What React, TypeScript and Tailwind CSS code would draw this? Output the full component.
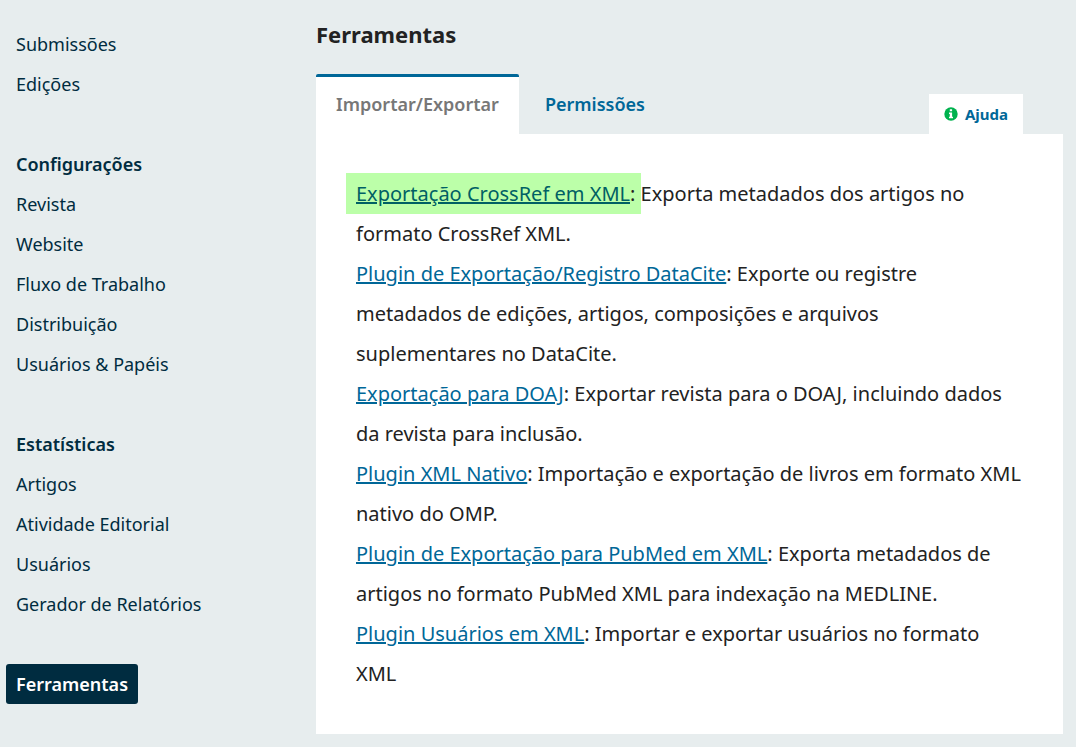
import React, { useState } from 'react';

interface NavItem {
  label: string;
  heading?: boolean;
  current?: boolean;
}

interface Plugin {
  name: string;
  description: string;
  highlighted?: boolean;
}

const NAV_GROUPS: NavItem[][] = [
  [{ label: 'Submissões' }, { label: 'Edições' }],
  [
    { label: 'Configurações', heading: true },
    { label: 'Revista' },
    { label: 'Website' },
    { label: 'Fluxo de Trabalho' },
    { label: 'Distribuição' },
    { label: 'Usuários & Papéis' },
  ],
  [
    { label: 'Estatísticas', heading: true },
    { label: 'Artigos' },
    { label: 'Atividade Editorial' },
    { label: 'Usuários' },
    { label: 'Gerador de Relatórios' },
  ],
  [{ label: 'Ferramentas', current: true }],
];

const PLUGINS: Plugin[] = [
  { name: 'Exportação CrossRef em XML', description: 'Exporta metadados dos artigos no formato CrossRef XML.', highlighted: true },
  { name: 'Plugin de Exportação/Registro DataCite', description: 'Exporte ou registre metadados de edições, artigos, composições e arquivos suplementares no DataCite.' },
  { name: 'Exportação para DOAJ', description: 'Exportar revista para o DOAJ, incluindo dados da revista para inclusão.' },
  { name: 'Plugin XML Nativo', description: 'Importação e exportação de livros em formato XML nativo do OMP.' },
  { name: 'Plugin de Exportação para PubMed em XML', description: 'Exporta metadados de artigos no formato PubMed XML para indexação na MEDLINE.' },
  { name: 'Plugin Usuários em XML', description: 'Importar e exportar usuários no formato XML' },
];

const InfoIcon: React.FC<{ className?: string }> = ({ className }) => (
  <svg className={className} viewBox="0 0 14 14" aria-hidden="true">
    <circle cx="7" cy="7" r="6.7" fill="#00b24e" />
    <path fill="#fff" d="M5.8 2.3h2.3v2H5.8zM5 5.4h3.1v4.3H9v1.6H5V9.7h.8V7H5z" />
  </svg>
);

const SideNav: React.FC = () => (
  <nav className="w-[300px] shrink-0 px-1.5 pt-6 text-[18px] leading-10 text-[#002c40]">
    {NAV_GROUPS.map((group, i) => (
      <ul key={i} className="mb-10">
        {group.map(item => (
          <li key={item.label}>
            {item.heading ? (
              <h2 className="px-2.5 font-semibold">{item.label}</h2>
            ) : (
              <a
                href="#"
                aria-current={item.current ? 'page' : undefined}
                className={item.current ? 'inline-block rounded-[3px] bg-[#002c40] px-2.5 align-top font-semibold text-white' : 'inline-block px-2.5 align-top'}
              >
                {item.label}
              </a>
            )}
          </li>
        ))}
      </ul>
    ))}
  </nav>
);

const PluginLink: React.FC<{ plugin: Plugin }> = ({ plugin }) => (
  <a href="#" className={plugin.highlighted ? 'text-[#006064] underline' : 'text-[#006798] underline'}>{plugin.name}</a>
);

const App: React.FC = () => {
  const [tab, setTab] = useState<'import' | 'permissions'>('import');

  const tabClass = (active: boolean) =>
    active
      ? 'h-[60px] rounded-t-xs border-t-[3px] border-[#006798] bg-white px-5 pb-0.5 text-[18px] font-semibold text-[#777777]'
      : 'h-[60px] border-t-[3px] border-transparent px-[26px] pb-0.5 text-[18px] font-semibold text-[#006798]';

  return (
    <div className="flex min-h-screen bg-[#e7edee] font-['Noto_Sans',sans-serif]">
      <SideNav />
      <main className="min-w-0 flex-1 pt-4 pr-[13px] pl-4">
        <h1 className="mb-[22px] text-[22px] leading-9 font-bold text-[#222222]">Ferramentas</h1>

        <div className="flex items-end">
          <div role="tablist" className="flex">
            <button role="tab" aria-selected={tab === 'import'} onClick={() => setTab('import')} className={tabClass(tab === 'import')}>
              Importar/Exportar
            </button>
            <button role="tab" aria-selected={tab === 'permissions'} onClick={() => setTab('permissions')} className={tabClass(tab === 'permissions')}>
              Permissões
            </button>
          </div>
          <button className="mr-10 ml-auto flex h-10 items-center gap-[7px] bg-white px-[15px] text-[15px] font-bold text-[#006798]">
            <InfoIcon className="size-3.5" />
            Ajuda
          </button>
        </div>

        <section role="tabpanel" className="bg-white p-10 text-[20px] leading-10 text-[#222222]">
          {tab === 'import' && (
            <ul>
              {PLUGINS.map(plugin => (
                <li key={plugin.name}>
                  {plugin.highlighted ? (
                    <span className="-mr-1.5 -ml-2.5 bg-[#bcffa9] py-[7px] pr-1.5 pl-2.5">
                      <PluginLink plugin={plugin} />:
                    </span>
                  ) : (
                    <>
                      <PluginLink plugin={plugin} />:
                    </>
                  )}{' '}
                  {plugin.description}
                </li>
              ))}
            </ul>
          )}
        </section>
      </main>
    </div>
  );
};

export default App;
